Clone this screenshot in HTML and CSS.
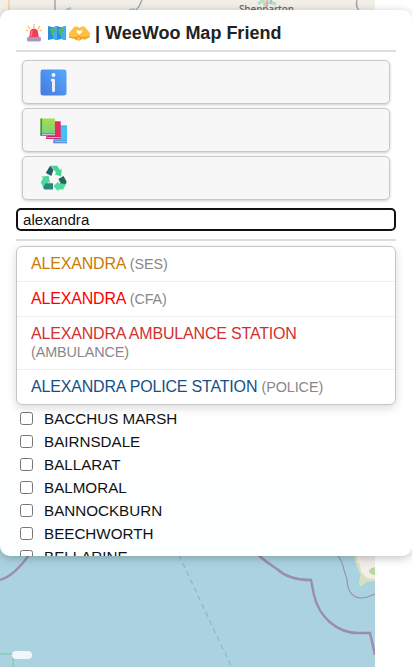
FILE: index.html
```html
<!DOCTYPE html>
<html lang="en">
<head>
<meta charset="utf-8">
<title>WeeWoo Map Friend</title>
<link rel="stylesheet" href="styles.css">
</head>
<body>
<svg class="map" viewBox="0 0 375 667" width="375" height="667" aria-hidden="true">
  <rect width="375" height="667" fill="#aad3df"/>
  <rect width="375" height="480" fill="#f2efe9"/>
  <path d="M9 0V12" stroke="#f6d7a8" stroke-width="2"/>
  <path d="M55 0V12M142 0Q140 6 135 12M357 0Q355 6 360 12" fill="none" stroke="#aaa6a6" stroke-width="1.5"/>
  <path d="M66 10l5-2M129 10l6-1" stroke="#9fcbd6" stroke-width="2"/>
  <path d="M258 4l5-4 2 5 5-3 6 2" fill="none" stroke="#b7dfc5" stroke-width="3"/>
  <path d="M267 0V7" stroke="#f1aaa0" stroke-width="2"/>
  <path d="M271 0V4" stroke="#9fcbd6" stroke-width="2"/>
  <text class="town" x="239" y="12.5" textLength="55">Shepparton</text>
  <g fill="none" stroke="#9d8cae">
    <path d="M0 580Q14 576 29 555" stroke-width="2.2"/>
    <path d="M257 554Q266 562 277 569Q289 580 310 580L311 580L314 595C319 617 337 633 358 633L370 633L375 655" stroke-width="2.4"/>
    <path d="M337 554Q343 563 344 570L347 579C347 590 352 598 361 598Q366 598 370 596L375 594" stroke-width="1.1"/>
  </g>
  <path d="M352 550L356 563L361 575L359 584L361 586L366 582L375 580V550Z" fill="#f2efe9"/>
  <path d="M352 550L356 563L361 575L359 584L361 586L366 582L375 581V579L367 578L361 572L360 564L357 562V550Z" fill="#d9e0bf"/>
  <path d="M375 567Q369 568 369 572Q371 575 375 575Z" fill="#b7d9a0"/>
  <path d="M179 555L206 613L233 670" fill="none" stroke="#8fb0e8" stroke-width="1.2" stroke-dasharray="5 4"/>
  <path d="M0 654H13V667" fill="none" stroke="#8cc8b8" stroke-width="1.5"/>
</svg>
<div class="scale"></div>

<main class="panel">
  <h1 class="title">
    <svg class="emoji" viewBox="0 0 18 18">
      <path d="M9 0V4M3 2l2 3M15 2l-2 3M1 6l2 1M17 6l-2 1" stroke="#f7b84a" stroke-width="1.2"/>
      <path d="M4 14L5.5 6Q9 3 12.5 6L14 14Z" fill="#f33e5b"/>
      <path d="M6 12l1-5" stroke="#ff8796" stroke-width="1.2"/>
      <rect x="2" y="13" width="14" height="4.4" rx="1.4" fill="#a99abd"/>
    </svg>
    <svg class="emoji" viewBox="0 0 18 18">
      <path d="M0 2L5 3.2L9 2L13 3.2L18 2V16L13 15L9 16L5 15L0 16Z" fill="#278fe0"/>
      <path d="M5 3.2L9 2V16L5 15ZM13 3.2L18 2V16L13 15Z" fill="#43aeea"/>
      <path d="M2 4l5 1 1 2-3 2v4L3 9ZM10 5l6-1-1 4-2 1 1 4-3-4Z" fill="#55b75a"/>
    </svg>
    <svg class="emoji emoji-wide" viewBox="0 0 21 18">
      <path d="M0 13V9L5 3Q8 1 10.5 4Q13 1 16 3L21 9V13L16 16L12 15L10 17L5 15Z" fill="#ffc23d"/>
      <path d="M0 13L5 14L10 12.5L13 14L20 13M8 14L7 16M12 14L11 16" fill="none" stroke="#e98b35" stroke-width="1.1"/>
      <path d="M10.5 11L7 8.3Q6.5 5.5 9 5.4L10.5 6.4Q13.5 4.4 14 7.2Q13.6 9 10.5 11Z" fill="#fff" stroke="#f5a02b" stroke-width=".7"/>
    </svg>
    <span class="name">| WeeWoo Map Friend</span>
  </h1>
  <div class="actions">
    <button class="action" aria-label="Info">
      <svg viewBox="0 0 28 28">
        <defs><linearGradient id="info" x1="0" y1="1" x2="1" y2="0"><stop stop-color="#4379dc"/><stop offset="1" stop-color="#57a9ff"/></linearGradient></defs>
        <rect x=".5" y=".5" width="27" height="27" rx="2.5" fill="url(#info)"/>
        <circle cx="14" cy="6.2" r="2" fill="#f5f1ff"/>
        <path d="M12.6 11.5H14V22.5" fill="none" stroke="#f5f1ff" stroke-width="3" stroke-linecap="round" stroke-linejoin="round"/>
      </svg>
    </button>
    <button class="action" aria-label="Docs">
      <svg viewBox="0 0 28 28">
        <defs><linearGradient id="book" x1="0" y1="0" x2="0" y2="1"><stop stop-color="#a6dd4c"/><stop offset="1" stop-color="#6fd088"/></linearGradient></defs>
        <path d="M14 8.5H28V27H14Z" fill="#45bdf5"/>
        <path d="M14 25.8H28" stroke="#4670c4" stroke-width="2.6"/>
        <path d="M15 25.7H28" stroke="#c9d2f4"/>
        <path d="M7 4.5H21.5V22.7H7Z" fill="#e62b60"/>
        <path d="M6.5 21.4H21.5" stroke="#b81f60" stroke-width="2.6"/>
        <path d="M7.5 21.4H21.5" stroke="#f0c4dc"/>
        <path d="M.5 1.5H15.5V19.5H.5Z" fill="url(#book)"/>
        <path d="M1.3 1.5V19" stroke="#42964b" stroke-width="1.7"/>
        <path d="M.5 18.3H15.5" stroke="#557b78" stroke-width="2.4"/>
        <path d="M2 18.2H15.5" stroke="#d3c9e9"/>
      </svg>
    </button>
    <button class="action" aria-label="Refresh">
      <svg viewBox="0 0 28 28">
        <path d="M10.5 .8H18L20.4 5L22.5 4.2L22 12L15 9.5L17 8.2L13.5 3.5Z" fill="#45d696"/>
        <path d="M10.5 .8L14 5L11.8 11.5L6 8.2Z" fill="#265f67"/>
        <path d="M9 11.2L10.4 18.8L8.4 18L6 23.8L4 24L.8 18.2L3.2 13.5L1 12.3Z" fill="#4bd99b"/>
        <path d="M6 18.8H13.5V25.5H4.6L3.2 23Z" fill="#2b8778"/>
        <path d="M14 22L19 16.8V19H27.5L24 25.5H19V27.5Z" fill="#4bdc9e"/>
        <path d="M19 14.5L24.5 11.5L27.7 17.5L26.5 19.8L21.5 19.2Z" fill="#24665e"/>
      </svg>
    </button>
  </div>
  <input class="search" type="text" value="alexandra" aria-label="Search">
  <div class="results">
    <ul class="dropdown">
      <li><span class="ses">ALEXANDRA</span> <small>(SES)</small></li>
      <li><span class="cfa">ALEXANDRA</span> <small>(CFA)</small></li>
      <li><span class="ambulance">ALEXANDRA AMBULANCE STATION</span> <small>(AMBULANCE)</small></li>
      <li><span class="police">ALEXANDRA POLICE STATION</span> <small>(POLICE)</small></li>
    </ul>
  </div>
  <div class="places">
    <label><input type="checkbox">BACCHUS MARSH</label>
    <label><input type="checkbox">BAIRNSDALE</label>
    <label><input type="checkbox">BALLARAT</label>
    <label><input type="checkbox">BALMORAL</label>
    <label><input type="checkbox">BANNOCKBURN</label>
    <label><input type="checkbox">BEECHWORTH</label>
    <label><input type="checkbox">BELLARINE</label>
  </div>
</main>
</body>
</html>
```
FILE: styles.css
```css
* { box-sizing: border-box; }
body {
  display: flow-root;
  margin: 0;
  height: 667px;
  overflow: hidden;
  position: relative;
  background: #fff;
  color: #111;
  font-family: "Liberation Sans", Arial, sans-serif;
}
.map { position: absolute; left: 0; top: 0; }
.town { font: 500 10px "Noto Sans", sans-serif; fill: #666; }
.scale {
  position: absolute;
  left: 12px;
  top: 651px;
  width: 20px;
  height: 8px;
  border-radius: 4px;
  background: #f1f6fa;
}
.panel {
  position: relative;
  height: 546px;
  margin-top: 10px;
  padding: 10px 16px 0;
  overflow: hidden;
  border-radius: 10px;
  background: rgba(255, 255, 255, .98);
  box-shadow: 0 2px 10px rgba(0, 0, 0, .25);
}
.title {
  display: flex;
  align-items: center;
  height: 32px;
  margin: 0;
  padding: 0 0 4px 9px;
  border-bottom: 2px solid #ddd;
  font-size: 18px;
  color: #222;
}
.emoji { width: 18px; height: 18px; margin-right: 5px; }
.emoji:nth-child(2) { margin-right: 3px; }
.emoji-wide { width: 21px; }
.name { white-space: nowrap; }
.actions { display: grid; gap: 4px; padding: 8px 6px; }
.action {
  display: flex;
  align-items: center;
  height: 44px;
  padding: 0 16px 0 17px;
  border: 1px solid #c8c8c8;
  border-radius: 5px;
  background: #f7f7f7;
  box-shadow: 0 1px 3px rgba(0, 0, 0, .2);
}
.action svg { width: 27px; height: 27px; }
.search {
  display: block;
  width: 100%;
  height: 23px;
  padding: 0 5px;
  border: 2px solid #111;
  border-radius: 5px;
  outline: 0;
  background: #fff;
  color: #111;
  font: 15.1px "Liberation Sans", Arial, sans-serif;
}
.results {
  position: relative;
  height: 166px;
  margin-top: 8px;
  border-top: 2px solid #ddd;
}
.dropdown {
  position: absolute;
  top: 5px;
  left: 0;
  right: 0;
  margin: 0;
  padding: 0;
  list-style: none;
  border: 1px solid #c5c5c5;
  border-radius: 6px;
  background: #fff;
  box-shadow: 0 3px 10px rgba(0, 0, 0, .15);
  font-size: 16px;
  line-height: 18px;
  letter-spacing: -.18px;
}
.dropdown li { padding: 8px 14px; }
.dropdown li + li { border-top: 1px solid #eee; }
.dropdown small { font-size: 14.4px; line-height: 1; letter-spacing: -.1px; color: #888; }
.ses { color: #cc7a00; }
.cfa { color: #f00; }
.ambulance { color: #d32f2f; }
.police { color: #145088; }
.places { display: grid; padding-top: 2px; }
.places label {
  display: flex;
  align-items: center;
  gap: 11px;
  height: 23px;
  padding-left: 4px;
  font-size: 15.2px;
}
.places input { width: 13px; height: 13px; margin: 0; }
```
